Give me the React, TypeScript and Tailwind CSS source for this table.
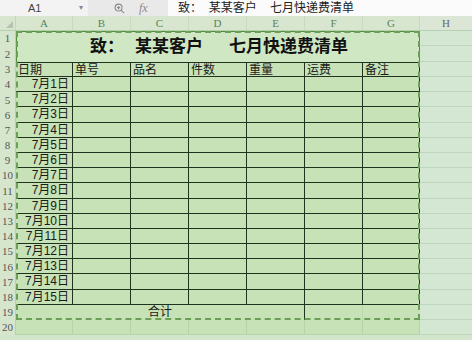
import React from 'react'

const colW = ['w-[57px]', 'w-[58px]', 'w-[58px]', 'w-[58px]', 'w-[58px]', 'w-[58px]', 'w-[57px]']
const letters = ['A', 'B', 'C', 'D', 'E', 'F', 'G']
const heads = ['日期', '单号', '品名', '件数', '重量', '运费', '备注']
const days = Array.from({ length: 15 }, (_, i) => `7月${i + 1}日`)

// 行高：1,2 为标题，3 为表头，4-18 为日期，19 合计，20 空行
const rowH = [
  'h-[15px]', 'h-[16px]', 'h-[15px]',
  ...Array.from({ length: 15 }, () => 'h-[15.2px]'),
  'h-[15px]', 'h-[15px]',
]

const font = { fontFamily: '"Liberation Sans", "Noto Sans CJK SC", sans-serif' }

export default function App() {
  return (
    <div className="w-[472px] h-[340px] overflow-hidden bg-[#d3e5cd] text-[#1a1a1a]" style={font}>
      {/* 编辑栏 */}
      <div className="h-[16px] flex items-center bg-[#f7f7f7] text-[11px]">
        <div className="w-[88px] h-full flex items-center justify-between pl-[28px] pr-[5px] bg-[#f3f3f3] text-[#444]">
          <span>A1</span>
          <span className="text-[8px] text-[#888]">▾</span>
        </div>
        <div className="w-[80px] h-full flex items-center gap-[14px] pl-[26px] bg-[#e9e9e9] text-[#8a8a8a]">
          <svg width="11" height="11" viewBox="0 0 12 12" fill="none" stroke="#8a8a8a" strokeWidth="1.2">
            <circle cx="5" cy="5" r="3.8" />
            <path d="M7.8 7.8L11 11M3.3 5h3.4M5 3.3v3.4" />
          </svg>
          <span className="italic text-[12px]" style={{ fontFamily: '"Liberation Serif", serif' }}>fx</span>
        </div>
        <div className="flex-1 h-full flex items-center pl-[10px] bg-[#fbfbfb] text-[12px] text-[#222] whitespace-pre">
          致：  某某客户    七月快递费清单
        </div>
      </div>

      {/* 列标 */}
      <div className="h-[15px] flex bg-[#d8e6d0] border-b border-[#b9cfb1] text-[11px] text-[#5b845b]" style={{ fontFamily: '"Liberation Serif", serif' }}>
        <div className="w-[16px] relative border-r border-[#c2d6bb]">
          <div className="absolute right-[2px] bottom-[2px] w-0 h-0 border-l-[7px] border-l-transparent border-b-[7px] border-b-[#b5c2b0]" />
        </div>
        {letters.map((l, i) => (
          <div key={l} className={`${colW[i]} flex items-center justify-center border-r border-[#c8dac1]`}>{l}</div>
        ))}
        <div className="flex-1 flex items-center justify-center bg-[#dbe6d7] text-[#666]">H</div>
      </div>

      <div className="flex">
        {/* 行号 */}
        <div className="w-[16px] flex flex-col bg-[#d5e6cd] text-[11px] text-[#555] border-r border-[#b9cfb1]" style={{ fontFamily: '"Liberation Serif", serif' }}>
          {rowH.map((h, i) => (
            <div key={i} className={`${h} flex items-center justify-center`}>{i + 1}</div>
          ))}
        </div>

        {/* 打印区域 A-G */}
        <div className="w-[404px] flex flex-col bg-[#c7e2b6] text-[12px]">
          <div className="relative flex flex-col">
            <div className="h-[31px] flex items-center justify-center pl-[2px] bg-[#cfe7c2] border border-b-0 border-[#4f8f3a] text-[17px] font-bold text-[#111] whitespace-pre">
              <span>致：</span>
              <span className="ml-[11px]">某某客户</span>
              <span className="ml-[26px]">七月快递费清单</span>
            </div>

            <div className="h-[15px] flex border-t border-[#1f331f]">
              {heads.map((t, i) => (
                <div key={t} className={`${colW[i]} border-r border-b border-[#1f331f] pl-[2px] leading-[14px]`}>{t}</div>
              ))}
            </div>

            {days.map((d) => (
              <div key={d} className="h-[15.2px] flex">
                {colW.map((w, i) => (
                  <div key={i} className={`${w} border-r border-b border-[#1f331f] leading-[14px] ${i === 0 ? 'text-right pr-[3px]' : ''}`}>
                    {i === 0 ? d : ''}
                  </div>
                ))}
              </div>
            ))}

            <div className="h-[15px] flex">
              <div className="w-[289px] border-r border-[#1f331f] flex items-center justify-center leading-[14px]">合计</div>
              <div className="w-[58px] border-r border-[#bcd6ae]" />
              <div className="w-[57px]" />
            </div>

            {/* 分页虚线 */}
            <div className="absolute inset-0 pointer-events-none border-2 border-dashed border-[#6b9e56]" />
          </div>

          <div className="h-[15px] flex">
            {colW.map((w, i) => (
              <div key={i} className={`${w} border-r border-b border-[#b7d2a8]`} />
            ))}
          </div>
        </div>

        {/* H 列 */}
        <div className="flex-1 flex flex-col bg-[#d4e7d3]">
          {rowH.map((h, i) => (
            <div key={i} className={`${h} border-b border-[#bed6bc]`} />
          ))}
        </div>
      </div>
    </div>
  )
}
